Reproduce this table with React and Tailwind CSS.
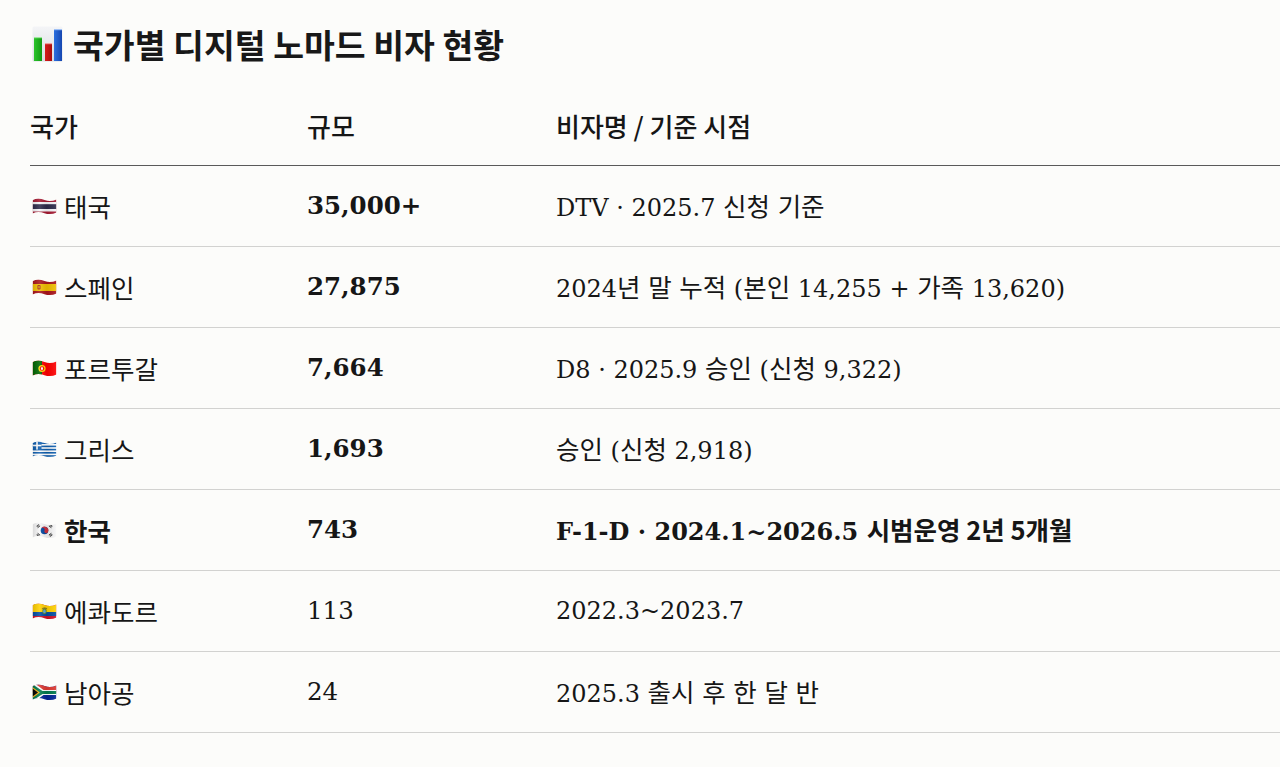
import React from "react";

const WAVE = "M0,2.2 C4,0.2 8,0.6 12,2 C16,3.4 20,3.2 24,1.4 L24,14.6 C20,16.4 16,16.6 12,15.2 C8,13.8 4,13.6 0,15.4 Z";

function Flag({ id, children }) {
  return (
    <svg width="25" height="17" viewBox="0 0 24 17" className="shrink-0">
      <defs>
        <clipPath id={`clip-${id}`}>
          <path d={WAVE} />
        </clipPath>
        <linearGradient id={`shade-${id}`} x1="0" x2="1" y1="0" y2="0">
          <stop offset="0" stopColor="#000" stopOpacity="0.12" />
          <stop offset="0.3" stopColor="#fff" stopOpacity="0.12" />
          <stop offset="0.6" stopColor="#000" stopOpacity="0.08" />
          <stop offset="1" stopColor="#fff" stopOpacity="0.1" />
        </linearGradient>
      </defs>
      <g clipPath={`url(#clip-${id})`}>
        {children}
        <rect x="0" y="0" width="24" height="17" fill={`url(#shade-${id})`} />
      </g>
    </svg>
  );
}

const flags = {
  th: (
    <Flag id="th">
      <rect x="0" y="0" width="24" height="17" fill="#A51931" />
      <rect x="0" y="4" width="24" height="9.5" fill="#F4F5F8" />
      <rect x="0" y="6.2" width="24" height="4.8" fill="#2D2A4A" />
    </Flag>
  ),
  es: (
    <Flag id="es">
      <rect x="0" y="0" width="24" height="17" fill="#AA151B" />
      <rect x="0" y="5" width="24" height="7" fill="#F1BF00" />
      <rect x="5" y="6" width="3" height="4.5" rx="0.8" fill="#AD1519" />
      <rect x="5.8" y="6.8" width="1.4" height="2.6" fill="#C8B100" />
    </Flag>
  ),
  pt: (
    <Flag id="pt">
      <rect x="0" y="0" width="24" height="17" fill="#FF0000" />
      <rect x="0" y="0" width="9.5" height="17" fill="#006600" />
      <circle cx="9.5" cy="8.5" r="3.6" fill="#FFE000" />
      <circle cx="9.5" cy="8.5" r="2.3" fill="#FF0000" />
      <rect x="8.5" y="7.2" width="2" height="2.6" rx="0.6" fill="#fff" />
    </Flag>
  ),
  gr: (
    <Flag id="gr">
      <rect x="0" y="0" width="24" height="17" fill="#fff" />
      {[0, 2, 4, 6, 8].map((i) => (
        <rect key={i} x="0" y={1.4 + i * 1.6} width="24" height="1.6" fill="#0D5EAF" />
      ))}
      <rect x="0" y="0" width="9" height="8.6" fill="#0D5EAF" />
      <rect x="3.7" y="0" width="1.6" height="8.6" fill="#fff" />
      <rect x="0" y="3.7" width="9" height="1.6" fill="#fff" />
    </Flag>
  ),
  kr: (
    <Flag id="kr">
      <rect x="0" y="0" width="24" height="17" fill="#F7F7F7" />
      <circle cx="12" cy="8.5" r="3.8" fill="#0047A0" />
      <path d="M8.2,8.5 A3.8,3.8 0 0 1 15.8,8.5 A1.9,1.9 0 0 1 12,8.5 A1.9,1.9 0 0 0 8.2,8.5 Z" fill="#CD2E3A" transform="rotate(25 12 8.5)" />
      <g stroke="#222" strokeWidth="0.8">
        <path d="M4,4.2 L6.4,2.4 M4.6,5 L7,3.2 M5.2,5.8 L7.6,4" />
        <path d="M16.4,4 L18.8,5.8 M17,3.2 L19.4,5 M17.6,2.4 L20,4.2" />
        <path d="M4,12.8 L6.4,14.6 M4.6,12 L7,13.8 M5.2,11.2 L7.6,13" />
        <path d="M16.4,13 L18.8,11.2 M17,13.8 L19.4,12 M17.6,14.6 L20,12.8" />
      </g>
    </Flag>
  ),
  ec: (
    <Flag id="ec">
      <rect x="0" y="0" width="24" height="17" fill="#CE1126" />
      <rect x="0" y="0" width="24" height="9" fill="#FFD100" />
      <rect x="0" y="9" width="24" height="4" fill="#034EA2" />
      <ellipse cx="12" cy="8" rx="2.2" ry="3" fill="#6B8E23" />
      <ellipse cx="12" cy="8.4" rx="1.3" ry="1.8" fill="#5FA8D3" />
      <path d="M9.4,5.6 Q12,4 14.6,5.6" stroke="#7A5A20" strokeWidth="0.8" fill="none" />
    </Flag>
  ),
  za: (
    <Flag id="za">
      <rect x="0" y="0" width="24" height="17" fill="#002395" />
      <rect x="0" y="0" width="24" height="8.5" fill="#DE3831" />
      <path d="M0,0 L3,0 L11,6 L24,6 L24,11 L11,11 L3,17 L0,17 Z" fill="#fff" />
      <path d="M0,1.2 L1.4,1.2 L10,7 L24,7 L24,10 L10,10 L1.4,15.8 L0,15.8 Z" fill="#007A4D" />
      <path d="M0,3 L7.4,8.5 L0,14 Z" fill="#FFB612" />
      <path d="M0,4.4 L5.6,8.5 L0,12.6 Z" fill="#000" />
    </Flag>
  ),
};

function ChartEmoji() {
  return (
    <svg width="31" height="36" viewBox="0 0 31 36" className="shrink-0">
      <defs>
        <linearGradient id="chartbg" x1="0" x2="0" y1="0" y2="1">
          <stop offset="0" stopColor="#F4F5F7" />
          <stop offset="1" stopColor="#D9DCE1" />
        </linearGradient>
        <linearGradient id="gbar" x1="0" x2="1">
          <stop offset="0" stopColor="#2BC42B" />
          <stop offset="1" stopColor="#129A12" />
        </linearGradient>
        <linearGradient id="rbar" x1="0" x2="1">
          <stop offset="0" stopColor="#D81B1B" />
          <stop offset="1" stopColor="#A80E0E" />
        </linearGradient>
        <linearGradient id="bbar" x1="0" x2="1">
          <stop offset="0" stopColor="#2B6FE0" />
          <stop offset="1" stopColor="#1647B0" />
        </linearGradient>
      </defs>
      <rect x="0.5" y="0.5" width="30" height="35" rx="1.5" fill="url(#chartbg)" />
      <rect x="2" y="12" width="8" height="23" fill="url(#gbar)" />
      <rect x="2" y="11" width="8" height="1.2" fill="#9BE89B" />
      <rect x="13" y="18" width="7" height="17" fill="url(#rbar)" />
      <rect x="13" y="17" width="7" height="1.2" fill="#F0A0A0" />
      <rect x="22" y="4" width="8" height="31" fill="url(#bbar)" />
      <rect x="22" y="3" width="8" height="1.2" fill="#9EC0F5" />
    </svg>
  );
}

const rows = [
  { flag: "th", name: "태국", size: "35,000+", sizeBold: true, desc: "DTV · 2025.7 신청 기준" },
  { flag: "es", name: "스페인", size: "27,875", sizeBold: true, desc: "2024년 말 누적 (본인 14,255 + 가족 13,620)" },
  { flag: "pt", name: "포르투갈", size: "7,664", sizeBold: true, desc: "D8 · 2025.9 승인 (신청 9,322)" },
  { flag: "gr", name: "그리스", size: "1,693", sizeBold: true, desc: "승인 (신청 2,918)" },
  { flag: "kr", name: "한국", size: "743", sizeBold: true, highlight: true, desc: null },
  { flag: "ec", name: "에콰도르", size: "113", sizeBold: false, desc: "2022.3~2023.7" },
  { flag: "za", name: "남아공", size: "24", sizeBold: false, desc: "2025.3 출시 후 한 달 반" },
];

const SERIF = "font-['DejaVu_Serif','Noto_Sans_CJK_KR',serif]";
const SANS = "font-['Noto_Sans_CJK_KR','Noto_Sans',sans-serif]";

function Mixed({ text }) {
  const parts = text.split(/([가-힣]+)/);
  return (
    <>
      {parts.map((p, i) =>
        /[가-힣]/.test(p) ? (
          <span key={i} className={`${SANS} text-[25.5px]`}>
            {p}
          </span>
        ) : (
          <span key={i}>{p}</span>
        )
      )}
    </>
  );
}

export default function App() {
  return (
    <div className="min-h-[767px] w-full overflow-hidden bg-[#fcfcfa] pl-[30px] text-[#161616]">
      <div className="flex h-[88px] items-center gap-[10px] pl-[2px]">
        <ChartEmoji />
        <h1 className={`${SANS} text-[33.5px] font-semibold leading-none text-[#181818]`}>
          국가별 디지털 노마드 비자 현황
        </h1>
      </div>

      <div className="grid h-[78px] grid-cols-[277px_249px_1fr] items-center border-b border-[#5a5a5a] pb-[2px]">
        <div className={`${SANS} text-[26px] font-medium`}>국가</div>
        <div className={`${SANS} text-[26px] font-medium`}>규모</div>
        <div className={`${SANS} text-[26px] font-medium`}>비자명 / 기준 시점</div>
      </div>

      {rows.map((r) => (
        <div
          key={r.flag}
          className="grid h-[81px] grid-cols-[277px_249px_1fr] items-center border-b border-[#d2d2d0]"
        >
          <div className="flex items-center gap-[7px] pl-[2px]">
            {flags[r.flag]}
            <span className={`${SANS} text-[25.5px] ${r.highlight ? "font-bold" : "font-normal"}`}>{r.name}</span>
          </div>
          <div className={`${SERIF} text-[24.5px] ${r.sizeBold ? "font-bold" : "font-normal"}`}>{r.size}</div>
          <div className={`${SERIF} text-[24px] whitespace-nowrap`}>
            {r.highlight ? (
              <span className="font-bold">
                F-1-D · 2024.1~2026.5{" "}
                <span className={`${SANS} text-[25.5px] font-bold`}>시범운영 2년 5개월</span>
              </span>
            ) : (
              <Mixed text={r.desc} />
            )}
          </div>
        </div>
      ))}
    </div>
  );
}
